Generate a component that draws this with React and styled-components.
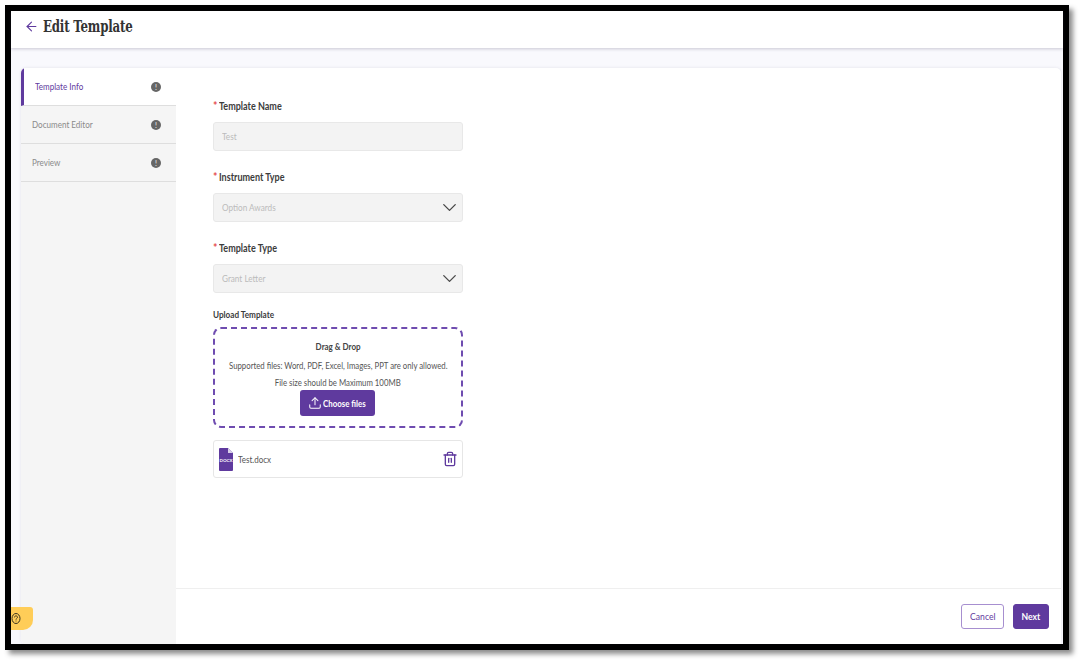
import styled, { createGlobalStyle } from "styled-components";
import { ArrowLeft, ChevronDown, Upload, Trash2 } from "lucide-react";

const PURPLE = "#5f3a9e";

const GlobalStyle = createGlobalStyle`
  html, body {
    margin: 0;
    padding: 0;
    background: #fff;
    font-family: "Lato", "Liberation Sans", sans-serif;
  }
  * { box-sizing: border-box; }
`;

const steps = [
  { name: "Template Info", active: true },
  { name: "Document Editor" },
  { name: "Preview" },
];

function FileIcon() {
  return (
    <svg width="14" height="23" viewBox="0 0 14 23">
      <path d="M0 1a1 1 0 0 1 1-1h8l5 5v17a1 1 0 0 1-1 1H1a1 1 0 0 1-1-1z" fill={PURPLE} />
      <path d="M9 0l5 5H9z" fill="#d9cfe9" />
      <text x="7" y="14" textAnchor="middle" fontSize="4.500" fontWeight="700" fill="#fff" fontFamily="Lato">
        DOCX
      </text>
    </svg>
  );
}

function HelpIcon() {
  return (
    <svg width="11" height="11" viewBox="0 0 11 11" fill="none" stroke="#3a3320" strokeWidth="1">
      <ellipse cx="5" cy="5.500" rx="4" ry="5" />
      <path d="M3.500 4.400c0-1 .6-1.500 1.500-1.500s1.500.6 1.500 1.400c0 1-1.500 1.200-1.500 2.300" />
      <path d="M5 7.600v.8" />
    </svg>
  );
}

export default function App() {
  return (
    <>
      <GlobalStyle />
      <Page>
        <Frame>
          <Header>
            <ArrowLeft size={15} color={PURPLE} strokeWidth={1.75} />
            <Title>Edit Template</Title>
          </Header>
          <Body>
            <Card>
              <Sidebar>
                {steps.map((step) => (
                  <StepRow key={step.name} $active={step.active}>
                    <StepName $active={step.active}>{step.name}</StepName>
                    <Badge>!</Badge>
                  </StepRow>
                ))}
              </Sidebar>
              <Main>
                <Form>
                  <Field>
                    <Label><Star>*</Star><Squeezed>Template Name</Squeezed></Label>
                    <Input><Placeholder>Test</Placeholder></Input>
                  </Field>
                  <Field>
                    <Label><Star>*</Star><Squeezed>Instrument Type</Squeezed></Label>
                    <SelectBox>
                      <Placeholder>Option Awards</Placeholder>
                      <ChevronDown size={23} color="#4a4a4a" strokeWidth={1.4} />
                    </SelectBox>
                  </Field>
                  <Field>
                    <Label><Star>*</Star><Squeezed>Template Type</Squeezed></Label>
                    <SelectBox>
                      <Placeholder>Grant Letter</Placeholder>
                      <ChevronDown size={23} color="#4a4a4a" strokeWidth={1.4} />
                    </SelectBox>
                  </Field>
                  <UploadLabel><Squeezed>Upload Template</Squeezed></UploadLabel>
                  <DropZone>
                    <DropTitle><Squeezed $center $scale={0.8}>Drag &amp; Drop</Squeezed></DropTitle>
                    <DropText><Squeezed $center $scale={0.82}>Supported files: Word, PDF, Excel, Images, PPT are only allowed.</Squeezed></DropText>
                    <DropText><Squeezed $center $scale={0.82}>File size should be Maximum 100MB</Squeezed></DropText>
                    <ChooseButton>
                      <Upload size={14} color="#fff" strokeWidth={1.75} />
                      <Squeezed $scale={0.83}>Choose files</Squeezed>
                    </ChooseButton>
                  </DropZone>
                  <FileRow>
                    <FileIcon />
                    <FileName><Squeezed $scale={0.8}>Test.docx</Squeezed></FileName>
                    <Trash2 size={16} color={PURPLE} strokeWidth={2} />
                  </FileRow>
                </Form>
                <Footer>
                  <CancelButton><Squeezed $center>Cancel</Squeezed></CancelButton>
                  <NextButton><Squeezed $center>Next</Squeezed></NextButton>
                </Footer>
              </Main>
            </Card>
          </Body>
          <HelpTab>
            <HelpIcon />
          </HelpTab>
        </Frame>
      </Page>
    </>
  );
}

const Page = styled.div`
  width: 1082px;
  height: 663px;
  padding: 5px 0 0 5px;
  overflow: hidden;
`;

const Frame = styled.div`
  position: relative;
  display: flex;
  flex-direction: column;
  width: 1064px;
  height: 645px;
  border: 6px solid #000;
  background: #f9f9fd;
  box-shadow: 4px 4px 5px rgba(0, 0, 0, 0.45);
`;

const Header = styled.header`
  display: flex;
  align-items: center;
  gap: 4px;
  height: 37px;
  padding: 0 0 7px 13px;
  background: #fff;
  box-shadow: 0 1px 3px rgba(60, 50, 90, 0.25);
  flex-shrink: 0;
`;

const Title = styled.h1`
  margin: 0;
  font-family: "DejaVu Serif", serif;
  font-size: 16px;
  font-weight: 700;
  letter-spacing: -0.3px;
  color: #333;
  transform: scaleX(0.74);
  transform-origin: left center;
  white-space: nowrap;
`;

const Squeezed = styled.span`
  display: inline-block;
  white-space: nowrap;
  transform: scaleX(${({ $scale }) => $scale || 0.86});
  transform-origin: ${({ $center }) => ($center ? "center" : "left center")};
`;

const Body = styled.div`
  flex: 1;
  min-height: 0;
  padding: 20px 2px 0 10px;
`;

const Card = styled.div`
  display: flex;
  height: 100%;
  background: #fff;
  border-radius: 5px 5px 0 5px;
  overflow: hidden;
  box-shadow: 0 0 3px rgba(60, 50, 90, 0.12);
`;

const Sidebar = styled.nav`
  width: 155px;
  flex-shrink: 0;
  background: #f5f5f5;
`;

const StepRow = styled.div`
  display: flex;
  align-items: center;
  justify-content: space-between;
  height: 38px;
  padding: 0 15px 0 11px;
  background: ${({ $active }) => ($active ? "#fff" : "#f5f5f5")};
  border-bottom: 1px solid #dedede;
  border-left: ${({ $active }) => ($active ? `3px solid ${PURPLE}` : "none")};
`;

const StepName = styled(Squeezed)`
  font-size: 9.500px;
  transform: scaleX(0.85);
  color: ${({ $active }) => ($active ? PURPLE : "#8a8a8a")};
`;

const Badge = styled.span`
  display: flex;
  align-items: center;
  justify-content: center;
  width: 10px;
  height: 10px;
  border-radius: 50%;
  background: #666;
  color: #ddd;
  font-size: 7px;
  font-weight: 700;
`;

const Main = styled.main`
  flex: 1;
  display: flex;
  flex-direction: column;
  min-width: 0;
`;

const Form = styled.div`
  flex: 1;
  display: flex;
  flex-direction: column;
  align-items: flex-start;
  padding: 32px 0 0 37px;
`;

const Field = styled.div`
  width: 250px;
  margin-bottom: 20px;
`;

const Label = styled.label`
  display: flex;
  gap: 2px;
  height: 22px;
  line-height: 12px;
  font-size: 10.500px;
  font-weight: 700;
  color: #3c3c3c;
`;

const Star = styled.span`
  color: #e5484d;
  font-weight: 700;
  font-size: 10.500px;
`;

const Input = styled.div`
  display: flex;
  align-items: center;
  width: 250px;
  height: 29px;
  padding: 0 8px;
  background: #f3f3f3;
  border: 1px solid #e8e8e8;
  border-radius: 3px;
`;

const Placeholder = styled(Squeezed)`
  font-size: 9.500px;
  color: #bbbbbb;
`;

const SelectBox = styled(Input)`
  justify-content: space-between;
  padding-right: 1px;
`;

const UploadLabel = styled.div`
  height: 18px;
  margin-top: -4px;
  line-height: 12px;
  font-size: 9.500px;
  font-weight: 700;
  color: #3c3c3c;
`;

const DropZone = styled.div`
  display: flex;
  flex-direction: column;
  align-items: center;
  width: 250px;
  height: 101px;
  margin-top: 0;
  padding-top: 11px;
  border: 2px dashed #6f4cb0;
  border-radius: 8px;
`;

const DropTitle = styled.div`
  height: 20px;
  line-height: 12px;
  font-size: 10px;
  font-weight: 700;
  color: #444;
`;

const DropText = styled.div`
  height: 16px;
  line-height: 12px;
  font-size: 9.500px;
  color: #555;

  & + & {
    padding-top: 1px;
  }
`;

const ChooseButton = styled.button`
  display: flex;
  align-items: center;
  gap: 1px;
  width: 75px;
  height: 26px;
  margin: -2px 2px 0 0;
  padding: 0 0 0 8px;
  border: none;
  border-radius: 3px;
  background: ${PURPLE};
  color: #fff;
  font-family: inherit;
  font-size: 9.500px;
  font-weight: 700;
`;

const FileRow = styled.div`
  display: flex;
  align-items: center;
  width: 250px;
  height: 38px;
  margin-top: 12px;
  padding: 0 4px 0 5px;
  border: 1px solid #e6e6e6;
  border-radius: 3px;
`;

const FileName = styled.span`
  flex: 1;
  margin-left: 5px;
  font-size: 10px;
  color: #555;
`;

const Footer = styled.footer`
  display: flex;
  justify-content: flex-end;
  align-items: center;
  gap: 9px;
  height: 56px;
  flex-shrink: 0;
  padding: 0 12px 0 0;
  border-top: 1px solid #efefef;
`;

const CancelButton = styled.button`
  width: 43px;
  height: 25px;
  padding: 0 0 2px;
  background: #fff;
  border: 1px solid #a78fd0;
  border-radius: 3px;
  color: ${PURPLE};
  font-family: inherit;
  font-size: 10px;
`;

const NextButton = styled(CancelButton)`
  width: 36px;
  background: ${PURPLE};
  border-color: ${PURPLE};
  color: #fff;
  font-weight: 700;
`;

const HelpTab = styled.div`
  position: absolute;
  left: 0;
  bottom: 14px;
  display: flex;
  align-items: center;
  width: 22px;
  height: 23px;
  background: #ffcd58;
  border-radius: 0 3px 10px 0;
`;
